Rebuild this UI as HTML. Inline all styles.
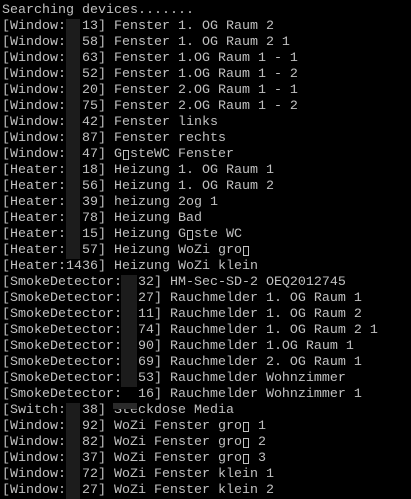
<!DOCTYPE html>
<html><head><meta charset="utf-8"><style>
html,body{margin:0;padding:0;background:#000;width:411px;height:499px;overflow:hidden}
pre{margin:0;position:absolute;left:2px;top:3px;font-family:"Liberation Mono",monospace;font-size:13.33px;line-height:16px;color:#c0c0c0;white-space:pre}
.q{display:inline-block;width:8px;height:16px;vertical-align:top;position:relative}
.q::after{content:"";position:absolute;left:1px;top:3px;width:6px;height:10px;border:1px solid #c0c0c0;box-sizing:border-box}
.r{position:absolute;background:#1c1c1c;height:16px}
</style></head><body>
<pre>Searching devices.......
[Window:  13] Fenster 1. OG Raum 2
[Window:  58] Fenster 1. OG Raum 2 1
[Window:  63] Fenster 1.OG Raum 1 - 1
[Window:  52] Fenster 1.OG Raum 1 - 2
[Window:  20] Fenster 2.OG Raum 1 - 1
[Window:  75] Fenster 2.OG Raum 1 - 2
[Window:  42] Fenster links
[Window:  87] Fenster rechts
[Window:  47] G<span class="q"></span>steWC Fenster
[Heater:  18] Heizung 1. OG Raum 1
[Heater:  56] Heizung 1. OG Raum 2
[Heater:  39] heizung 2og 1
[Heater:  78] Heizung Bad
[Heater:  15] Heizung G<span class="q"></span>ste WC
[Heater:  57] Heizung WoZi gro<span class="q"></span>
[Heater:1436] Heizung WoZi klein
[SmokeDetector:  32] HM-Sec-SD-2 OEQ2012745
[SmokeDetector:  27] Rauchmelder 1. OG Raum 1
[SmokeDetector:  11] Rauchmelder 1. OG Raum 2
[SmokeDetector:  74] Rauchmelder 1. OG Raum 2 1
[SmokeDetector:  90] Rauchmelder 1.OG Raum 1
[SmokeDetector:  69] Rauchmelder 2. OG Raum 1
[SmokeDetector:  53] Rauchmelder Wohnzimmer
[SmokeDetector:  16] Rauchmelder Wohnzimmer 1
[Switch:  38] Steckdose Media
[Window:  92] WoZi Fenster gro<span class="q"></span> 1
[Window:  82] WoZi Fenster gro<span class="q"></span> 2
[Window:  37] WoZi Fenster gro<span class="q"></span> 3
[Window:  72] WoZi Fenster klein 1
[Window:  27] WoZi Fenster klein 2</pre>
<div class="r" style="left:66px;top:19px;width:14px;height:240px"></div>
<div class="r" style="left:121px;top:275px;width:16px;height:112px"></div>
<div class="r" style="left:66px;top:403px;width:14px;height:96px"></div>
<div class="r" style="left:113px;top:403px;width:24px;height:6px;background:#2a2a2a"></div>
</body></html>
